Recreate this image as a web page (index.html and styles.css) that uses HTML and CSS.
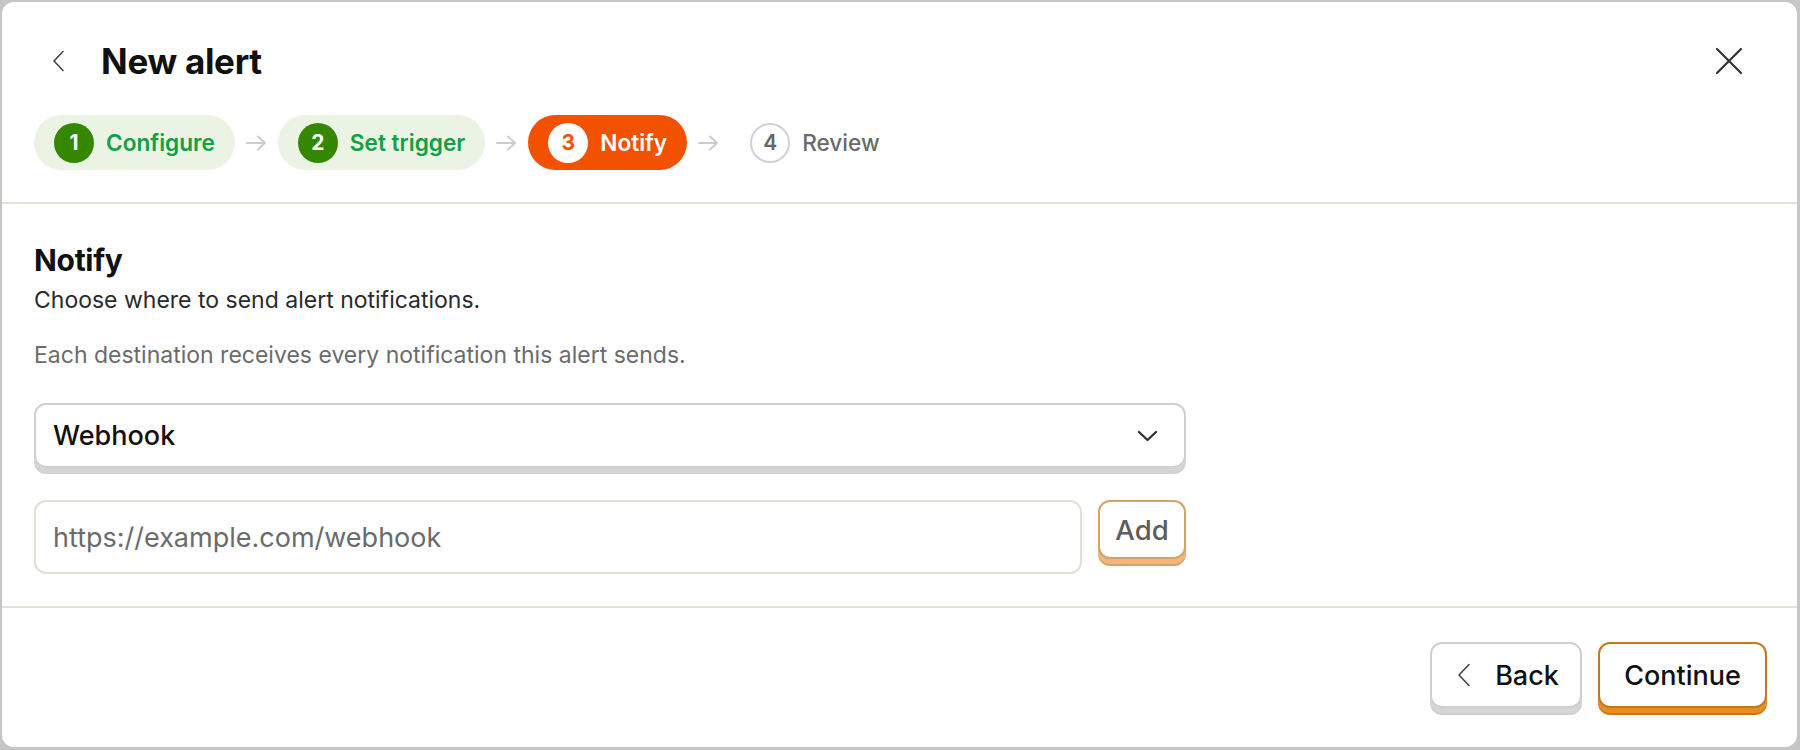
FILE: index.html
```html
<!DOCTYPE html>
<html lang="en">
<head>
<meta charset="utf-8">
<title>New alert</title>
<link rel="stylesheet" href="styles.css">
</head>
<body>
<div class="card">
  <header class="head">
    <div class="title-row">
      <button class="icon-btn back-icon" aria-label="Back">
        <svg width="13" height="22" viewBox="0 0 13 22"><path d="M11 1.5 L2 11 L11 20.5" fill="none" stroke="#444" stroke-width="1.6" stroke-linecap="round" stroke-linejoin="round"/></svg>
      </button>
      <h1 class="title">New alert</h1>
      <button class="icon-btn close-icon" aria-label="Close">
        <svg width="28" height="28" viewBox="0 0 28 28"><path d="M2 2 L26 26 M26 2 L2 26" fill="none" stroke="#333" stroke-width="2.2" stroke-linecap="round"/></svg>
      </button>
    </div>
    <ol class="steps">
      <li class="step done"><span class="num">1</span><span class="label">Configure</span></li>
      <li class="arrow"><svg width="21" height="16" viewBox="0 0 21 16"><path d="M1 8 H19 M12 1.5 L19 8 L12 14.5" fill="none" stroke="#cccccc" stroke-width="2" stroke-linecap="round" stroke-linejoin="round"/></svg></li>
      <li class="step done"><span class="num">2</span><span class="label">Set trigger</span></li>
      <li class="arrow"><svg width="21" height="16" viewBox="0 0 21 16"><path d="M1 8 H19 M12 1.5 L19 8 L12 14.5" fill="none" stroke="#cccccc" stroke-width="2" stroke-linecap="round" stroke-linejoin="round"/></svg></li>
      <li class="step current"><span class="num">3</span><span class="label">Notify</span></li>
      <li class="arrow"><svg width="21" height="16" viewBox="0 0 21 16"><path d="M1 8 H19 M12 1.5 L19 8 L12 14.5" fill="none" stroke="#cccccc" stroke-width="2" stroke-linecap="round" stroke-linejoin="round"/></svg></li>
      <li class="step todo"><span class="num">4</span><span class="label">Review</span></li>
    </ol>
  </header>

  <main class="body">
    <h2 class="section-title">Notify</h2>
    <p class="subtitle">Choose where to send alert notifications.</p>
    <p class="hint">Each destination receives every notification this alert sends.</p>

    <div class="select">
      <span class="select-value">Webhook</span>
      <svg width="21" height="12" viewBox="0 0 21 12"><path d="M2 2 L10.5 10 L19 2" fill="none" stroke="#333" stroke-width="2.4" stroke-linecap="round" stroke-linejoin="round"/></svg>
    </div>

    <div class="input-row">
      <input class="text-input" type="text" placeholder="https://example.com/webhook">
      <button class="btn btn-add">Add</button>
    </div>
  </main>

  <footer class="foot">
    <button class="btn btn-back">
      <svg width="14" height="24" viewBox="0 0 14 24"><path d="M12 1.5 L2 12 L12 22.5" fill="none" stroke="#444" stroke-width="1.6" stroke-linecap="round" stroke-linejoin="round"/></svg>
      <span>Back</span>
    </button>
    <button class="btn btn-continue">Continue</button>
  </footer>
</div>
</body>
</html>
```

FILE: styles.css
```css
* { box-sizing: border-box; }

html, body {
  margin: 0;
  height: 100%;
}

body {
  background: #c6c6c6;
  padding: 2px 3px 3px 2px;
  font-family: "Inter", "Liberation Sans", sans-serif;
  color: #111;
}

.card {
  background: #fff;
  height: 100%;
  border-radius: 12px;
  display: flex;
  flex-direction: column;
}

/* header */
.head {
  padding: 36px 54px 32px 32px;
  border-bottom: 2px solid #e2e2d6;
}

.title-row {
  display: flex;
  align-items: center;
  height: 46px;
}

.icon-btn {
  background: none;
  border: 0;
  padding: 0;
  display: flex;
  align-items: center;
  justify-content: center;
  cursor: pointer;
}

.back-icon {
  width: 24px;
  margin-left: 12px;
  margin-right: 31px;
}

.title {
  margin: 0;
  font-size: 35px;
  font-weight: 700;
  letter-spacing: -0.3px;
  flex: 1;
}

.close-icon {
  width: 28px;
  height: 28px;
}

.steps {
  list-style: none;
  margin: 31px 0 0;
  padding: 0;
  display: flex;
  align-items: center;
  gap: 11px;
}

.step {
  display: flex;
  align-items: center;
  gap: 12px;
  height: 55px;
  padding: 0 20px;
  border-radius: 28px;
  font-size: 22.6px;
  font-weight: 600;
}

.num {
  width: 40px;
  height: 40px;
  border-radius: 50%;
  display: flex;
  align-items: center;
  justify-content: center;
  font-size: 21px;
  font-weight: 700;
}

.step.done {
  background: #eaf3e4;
  color: #12a046;
}
.step.done .num {
  background: #358700;
  color: #fff;
}

.step.current {
  background: #f25100;
  color: #fff;
}
.step.current .num {
  background: #fff;
  color: #f25100;
}

.step.todo {
  color: #6a6a6a;
  font-weight: 500;
}
.step.todo .num {
  border: 2px solid #d2d2d2;
  color: #666;
  font-weight: 600;
}

.arrow {
  display: flex;
  align-items: center;
}

/* body */
.body {
  padding: 38px 34px 32px 32px;
  border-bottom: 2px solid #e2e2d6;
}

.section-title {
  margin: 0;
  font-size: 30px;
  font-weight: 700;
  line-height: 36px;
  letter-spacing: -0.3px;
}

.subtitle {
  margin: 7px 0 0;
  font-size: 23px;
  line-height: 30px;
  color: #2a2a2a;
}

.hint {
  margin: 25px 0 0;
  font-size: 23px;
  line-height: 30px;
  color: #6b6b6b;
}

.select {
  margin-top: 33px;
  width: 1152px;
  height: 65px;
  border: 2px solid #cfcfcf;
  border-radius: 12px;
  box-shadow: 0 6px 0 #d4d4d4;
  display: flex;
  align-items: center;
  justify-content: space-between;
  padding: 0 26px 0 17px;
  font-size: 27px;
  font-weight: 500;
}

.input-row {
  margin-top: 32px;
  display: flex;
  align-items: flex-start;
  gap: 16px;
  width: 1152px;
}

.text-input {
  flex: 1;
  height: 74px;
  border: 2px solid #e0e0d6;
  border-radius: 12px;
  padding: 0 17px;
  font-family: inherit;
  font-size: 27px;
  color: #111;
  outline: none;
}
.text-input::placeholder {
  color: #6b6b6b;
}

.btn {
  font-family: inherit;
  background: #fff;
  border-radius: 12px;
  cursor: pointer;
  display: flex;
  align-items: center;
  justify-content: center;
}

.btn-add {
  width: 88px;
  height: 59px;
  border: 2px solid #d2a564;
  box-shadow: 0 5px 0 #f3b678, 0 7px 0 #d2a564;
  font-size: 27.5px;
  font-weight: 500;
  color: #5c5c5c;
}

/* footer */
.foot {
  flex: 1;
  display: flex;
  justify-content: flex-end;
  align-items: flex-start;
  gap: 16px;
  padding: 34px 30px 0 0;
}

.btn-back {
  width: 152px;
  height: 66px;
  border: 2px solid #cfcfcf;
  box-shadow: 0 5px 0 #d8d6d4, 0 7px 0 #cfcfcf;
  gap: 24px;
  font-size: 27px;
  font-weight: 500;
  color: #111;
  padding: 0 0 0 4px;
}

.btn-continue {
  width: 169px;
  height: 66px;
  border: 2px solid #c27b1c;
  box-shadow: 0 5px 0 #ec8d24, 0 7px 0 #c27b1c;
  font-size: 27px;
  font-weight: 500;
  color: #111;
}
```
